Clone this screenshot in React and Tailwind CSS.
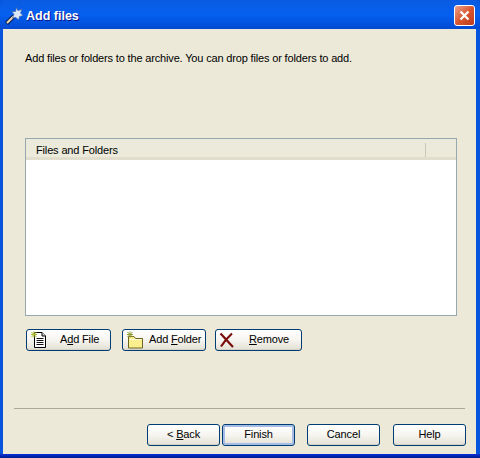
const XpButton = ({ children, className = '', isDefault = false, icon = null, textClass = 'flex-1 text-center' }) => (
    <button
        className={`relative flex items-center h-[22px] rounded-[3px] border border-[#003c74] bg-gradient-to-b from-white via-[#f6f5f0] to-[#e3e0d4] text-[11px] tracking-[-0.15px] whitespace-nowrap text-black ${isDefault ? 'shadow-[inset_0_0_0_2px_#a5bde6]' : 'shadow-[inset_0_-1px_0_#d6d0c5]'} ${className}`}
    >
        {icon}
        <span className={`pb-[2px] ${textClass}`}>{children}</span>
    </button>
);

const WandIcon = () => (
    <svg width="20" height="20" viewBox="0 0 20 20" className="shrink-0">
        <path d="M2.5 17.5 L10 10" stroke="#0b1f66" strokeWidth="4.5" />
        <path d="M3 17 L10 10" stroke="#f0dca8" strokeWidth="2" />
        <path d="M12.5 1.5 L13.8 4.5 L18 3.5 L16.5 7 L19 9.5 L15.5 10.5 L14.5 14 L12 11.5 L8.5 12 L10 8.5 L8 5.5 L11.5 5.5 Z" fill="#dce8fa" stroke="#3f64a8" strokeWidth="0.7" />
    </svg>
);

const FileIcon = () => (
    <svg width="18" height="18" viewBox="0 0 18 18" className="ml-[3px] shrink-0">
        <path d="M4.5 1.5 H12 L15.5 5 V16.5 H4.5 Z" fill="#fff" stroke="#000" />
        <path d="M12 1.5 V5 H15.5" fill="#ddd" stroke="#000" />
        <path d="M6.5 7.5 H13.5 M6.5 9.5 H13.5 M6.5 11.5 H13.5 M6.5 13.5 H13.5" stroke="#111" />
        <path d="M1 3.5 H7 M4 0.5 V6.5 M1.5 1 L6.5 6 M6.5 1 L1.5 6" stroke="#a8b82a" />
    </svg>
);

const FolderIcon = () => (
    <svg width="18" height="18" viewBox="0 0 18 18" className="ml-[3px] shrink-0">
        <path d="M2.5 5.5 H8 L9.5 7.5 H16.5 V17 H2.5 Z" fill="#fbee8e" stroke="#6b6424" />
        <path d="M3.5 8.5 H15.5" stroke="#fffbd8" />
        <path d="M1 3.5 H7 M4 0.5 V6.5 M1.5 1 L6.5 6 M6.5 1 L1.5 6" stroke="#8f9c30" />
    </svg>
);

const RemoveIcon = () => (
    <svg width="16" height="16" viewBox="0 0 16 16" className="ml-[3px] shrink-0">
        <path d="M1.5 1.5 C5 5 9 10 14 15 M13 1.5 C9 5 5 10 2 14.5" fill="none" stroke="#7a0c0c" strokeWidth="2.2" />
    </svg>
);

const App = () => {
    return (
        <div className="w-[480px] h-[458px] flex flex-col overflow-hidden bg-[#0855dd] font-['Liberation_Sans',sans-serif]">
            {/* Title bar */}
            <div className="h-[29px] shrink-0 flex items-center pl-[4px] pr-[5px] pt-[2px] rounded-t-[7px] bg-gradient-to-b from-[#0a5be0] via-[#0560f0] to-[#0349d2]">
                <WandIcon />
                <span className="ml-[2px] pt-[2px] flex-1 text-[12.5px] font-bold text-white [text-shadow:1px_1px_#0f1089]">Add files</span>
                <div className="w-[21px] h-[21px] rounded-[3px] border border-white bg-gradient-to-br from-[#e9a08a] via-[#d9572f] to-[#bd3a1c] flex items-center justify-center">
                    <svg width="13" height="13" viewBox="0 0 13 13">
                        <path d="M2.5 2.5 L10.5 10.5 M10.5 2.5 L2.5 10.5" stroke="#fff" strokeWidth="2.2" />
                    </svg>
                </div>
            </div>

            {/* Dialog body */}
            <div className="flex-1 flex flex-col ml-[3px] mr-[4px] bg-[#ece9d8] text-black">
                <p className="mt-[21px] ml-[22px] text-[11px] tracking-[-0.16px] leading-[16px] whitespace-nowrap">
                    Add files or folders to the archive. You can drop files or folders to add.
                </p>

                <div className="mt-[72px] ml-[22px] w-[432px] h-[178px] flex flex-col border border-[#98a8b0] bg-white">
                    <div className="h-[21px] pt-[3px] flex items-center border-b-[3px] border-[#e2decd] bg-[#ebeadb] text-[11px] tracking-[-0.15px]">
                        <span className="w-[399px] pl-[10px] leading-[16px]">Files and Folders</span>
                        <span className="h-[14px] w-px bg-[#cbc7b8]" />
                    </div>
                </div>

                <div className="mt-[13px] ml-[23px] flex">
                    <XpButton className="w-[85px]" icon={<FileIcon />} textClass="ml-[12px]">
                        A<span className="underline">d</span>d File
                    </XpButton>
                    <XpButton className="w-[84px] ml-[11px]" icon={<FolderIcon />} textClass="ml-[5px]">
                        Add <span className="underline">F</span>older
                    </XpButton>
                    <XpButton className="w-[87px] ml-[9px]" icon={<RemoveIcon />} textClass="ml-[14px]">
                        <span className="underline">R</span>emove
                    </XpButton>
                </div>

                <div className="mt-[57px] mx-[11px] h-[2px] border-t border-[#aca899] border-b-white" />

                <div className="mt-[14px] flex ml-[144px]">
                    <XpButton className="w-[73px]">
                        &lt; <span className="underline">B</span>ack
                    </XpButton>
                    <XpButton className="w-[73px] ml-[2px]" isDefault>Finish</XpButton>
                    <XpButton className="w-[73px] ml-[12px]">Cancel</XpButton>
                    <XpButton className="w-[73px] ml-[13px]">Help</XpButton>
                </div>
            </div>
            <div className="h-[4px] shrink-0 bg-gradient-to-b from-[#0831d9] to-[#001a8c]" />
        </div>
    );
};

export default App;
